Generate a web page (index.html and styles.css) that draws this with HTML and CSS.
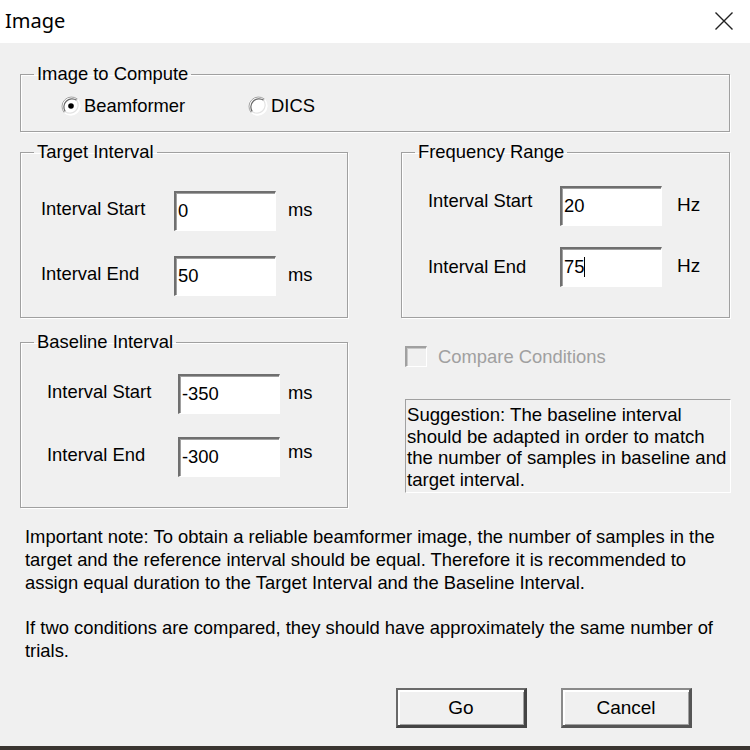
FILE: index.html
```html
<!DOCTYPE html>
<html lang="en">
<head>
<meta charset="utf-8">
<title>Image</title>
<link rel="stylesheet" href="styles.css">
</head>
<body>
<div class="window">
  <header class="titlebar">
    <span class="title">Image</span>
    <svg class="close" width="20" height="20" viewBox="0 0 20 20" aria-label="Close">
      <path d="M1.5 1.5 L18.5 18.5 M18.5 1.5 L1.5 18.5" stroke="#222" stroke-width="1.4" fill="none"/>
    </svg>
  </header>

  <main class="content">
    <fieldset class="group compute">
      <legend>Image to Compute</legend>
      <div class="radios">
        <label class="option first">
          <svg class="radio" width="20" height="20" viewBox="0 0 20 20">
            <circle cx="10" cy="10" r="9.5" fill="#fff"/>
            <path d="M3.3 16.7 A9.5 9.5 0 0 1 16.7 3.3" stroke="#a0a0a0" stroke-width="1" fill="none"/>
            <path d="M4.3 15.7 A8.2 8.2 0 0 1 15.7 4.3" stroke="#696969" stroke-width="1.2" fill="none"/>
            <path d="M16.7 3.3 A9.5 9.5 0 0 1 3.3 16.7" stroke="#ffffff" stroke-width="1" fill="none"/>
            <path d="M15.7 4.3 A8.2 8.2 0 0 1 4.3 15.7" stroke="#e3e3e3" stroke-width="1.2" fill="none"/>
            <circle cx="10" cy="10" r="2.8" fill="#000"/>
          </svg>
          <span>Beamformer</span>
        </label>
        <label class="option">
          <svg class="radio" width="20" height="20" viewBox="0 0 20 20">
            <circle cx="10" cy="10" r="9.5" fill="#fff"/>
            <path d="M3.3 16.7 A9.5 9.5 0 0 1 16.7 3.3" stroke="#a0a0a0" stroke-width="1" fill="none"/>
            <path d="M4.3 15.7 A8.2 8.2 0 0 1 15.7 4.3" stroke="#696969" stroke-width="1.2" fill="none"/>
            <path d="M16.7 3.3 A9.5 9.5 0 0 1 3.3 16.7" stroke="#ffffff" stroke-width="1" fill="none"/>
            <path d="M15.7 4.3 A8.2 8.2 0 0 1 4.3 15.7" stroke="#e3e3e3" stroke-width="1.2" fill="none"/>
          </svg>
          <span>DICS</span>
        </label>
      </div>
    </fieldset>

    <div class="panels">
      <fieldset class="group interval target">
        <legend>Target Interval</legend>
        <div class="rows">
          <div class="row"><span class="lbl">Interval Start</span><div class="field">0</div><span class="unit">ms</span></div>
          <div class="row"><span class="lbl">Interval End</span><div class="field">50</div><span class="unit">ms</span></div>
        </div>
      </fieldset>

      <fieldset class="group interval freq">
        <legend>Frequency Range</legend>
        <div class="rows">
          <div class="row"><span class="lbl lbl-high">Interval Start</span><div class="field">20</div><span class="unit">Hz</span></div>
          <div class="row"><span class="lbl lbl-mid">Interval End</span><div class="field">75<span class="caret"></span></div><span class="unit">Hz</span></div>
        </div>
      </fieldset>

      <fieldset class="group interval baseline">
        <legend>Baseline Interval</legend>
        <div class="rows">
          <div class="row"><span class="lbl">Interval Start</span><div class="field">-350</div><span class="unit">ms</span></div>
          <div class="row"><span class="lbl">Interval End</span><div class="field">-300</div><span class="unit unit-high">ms</span></div>
        </div>
      </fieldset>

      <div class="side">
        <label class="check disabled">
          <span class="box"></span>
          <span>Compare Conditions</span>
        </label>
        <div class="suggestion">Suggestion: The baseline interval should be adapted in order to match the number of samples in baseline and target interval.</div>
      </div>
    </div>

    <div class="notes">
      <p>Important note: To obtain a reliable beamformer image, the number of samples in the target and the reference interval should be equal. Therefore it is recommended to assign equal duration to the Target Interval and the Baseline Interval.</p>
      <p>If two conditions are compared, they should have approximately the same number of trials.</p>
    </div>

    <div class="actions">
      <button class="btn default" type="button">Go</button>
      <button class="btn" type="button">Cancel</button>
    </div>
  </main>

  <div class="taskbar"></div>
</div>
</body>
</html>
```

FILE: styles.css
```css
* { box-sizing: border-box; }

html, body {
  margin: 0;
  padding: 0;
  width: 750px;
  height: 750px;
  overflow: hidden;
  background: #f0f0f0;
}

body {
  font-family: "Liberation Sans", Arial, sans-serif;
  font-size: 18.4px;
  line-height: 22px;
  color: #000;
}

.window {
  width: 750px;
  height: 750px;
  display: flex;
  flex-direction: column;
  background: #f0f0f0;
}

/* Title bar */
.titlebar {
  height: 43px;
  flex: none;
  background: #fff;
  display: flex;
  align-items: center;
  justify-content: space-between;
  padding: 0 16px 0 5px;
}

.title {
  font-family: "Noto Sans", "Open Sans", sans-serif;
  font-size: 20px;
  color: #000;
  margin-top: -2px;
}

.close {
  display: block;
  margin-top: -2px;
}

/* Content */
.content {
  padding: 20px 20px 0 20px;
}

.group {
  margin: 0;
  padding: 0;
  min-inline-size: 0;
  border: 1px solid #a0a0a0;
  box-shadow: inset 1px 1px 0 #fff, 1px 1px 0 #fff;
}

.group legend {
  margin-left: 13px;
  padding: 0 3px;
  height: 22px;
  line-height: 22px;
}

/* Image to compute */
.compute {
  padding: 10px 0 14px 0;
}

.radios {
  display: flex;
  align-items: center;
  height: 22px;
  padding-left: 40px;
}

.option {
  display: flex;
  align-items: center;
  gap: 3px;
}

.option.first {
  width: 187px;
}

.radio {
  display: block;
  flex: none;
}

/* Panels */
.panels {
  display: grid;
  grid-template-columns: 328px 329px;
  column-gap: 53px;
  row-gap: 13px;
  margin-top: 9px;
}

.interval {
  padding: var(--pt) 0 var(--pb) 0;
}

.rows {
  display: flex;
  flex-direction: column;
  gap: var(--gap);
  padding-left: var(--pl);
}

.target   { --pt: 28px; --pb: 21px; --pl: 20px; --gap: 25px; --lw: 133px; --ug: 12px; }
.freq     { --pt: 23px; --pb: 30px; --pl: 26px; --gap: 21px; --lw: 132px; --ug: 15px; }
.baseline { --pt: 21px; --pb: 30px; --pl: 26px; --gap: 23px; --lw: 131px; --ug: 8px; }

.freq .unit { font-size: 19px; }

.row {
  display: flex;
  align-items: center;
  height: 40px;
}

.lbl {
  width: var(--lw);
  flex: none;
  margin-top: -5px;
}

.lbl.lbl-high { margin-top: -10px; }
.lbl.lbl-mid { margin-top: 0; }

.field {
  width: 102px;
  height: 40px;
  flex: none;
  background: #fff;
  border-style: solid;
  border-width: 2px 1px 1px 2px;
  border-color: #6f6f6f #ffffff #ffffff #6f6f6f;
  box-shadow: inset 1px 1px 0 #a0a0a0;
  padding: 7px 0 0 2px;
  line-height: 22px;
  white-space: nowrap;
}

.caret {
  display: inline-block;
  width: 1px;
  height: 20px;
  background: #000;
  vertical-align: -4px;
}

.unit {
  margin-left: var(--ug);
  margin-top: -2px;
}

.unit-high {
  margin-top: -10px;
}

/* Side column */
.side {
  padding-left: 4px;
  padding-top: 15px;
}

.check {
  display: flex;
  align-items: center;
  gap: 11px;
  height: 21px;
}

.check.disabled {
  color: #a0a0a0;
}

.check .box {
  width: 22px;
  height: 21px;
  flex: none;
  border-style: solid;
  border-width: 2px 1px 1px 2px;
  border-color: #a0a0a0 #fff #fff #a0a0a0;
  box-shadow: inset 1px 1px 0 #c8c8c8;
  background: #f0f0f0;
}

.suggestion {
  margin-top: 32px;
  width: 326px;
  height: 94px;
  border-style: solid;
  border-width: 1px;
  border-color: #a0a0a0 #fff #fff #a0a0a0;
  padding: 4px 0 0 1px;
  line-height: 21.7px;
  font-size: 18.6px;
}

/* Notes */
.notes {
  margin-top: 17px;
  padding-left: 5px;
}

.notes p {
  margin: 0;
  line-height: 23px;
}

.notes p + p {
  margin-top: 22px;
}

/* Buttons */
.actions {
  display: flex;
  justify-content: flex-end;
  gap: 34px;
  padding-right: 38px;
  margin-top: 26px;
}

.btn {
  width: 131px;
  height: 40px;
  font: inherit;
  font-size: 19px;
  color: #000;
  background: #f0f0f0;
  border-style: solid;
  border-width: 2px 3px 3px 2px;
  border-color: #8a8a8a #555 #555 #8a8a8a;
  box-shadow: inset 2px 2px 0 #fff, inset -1px -1px 0 #a0a0a0;
  padding: 0;
}

.btn.default {
  border-color: #6a6a6a #444 #444 #6a6a6a;
}

/* Bottom strip */
.taskbar {
  margin-top: auto;
  height: 4px;
  flex: none;
  background: #3a3530;
}
```
